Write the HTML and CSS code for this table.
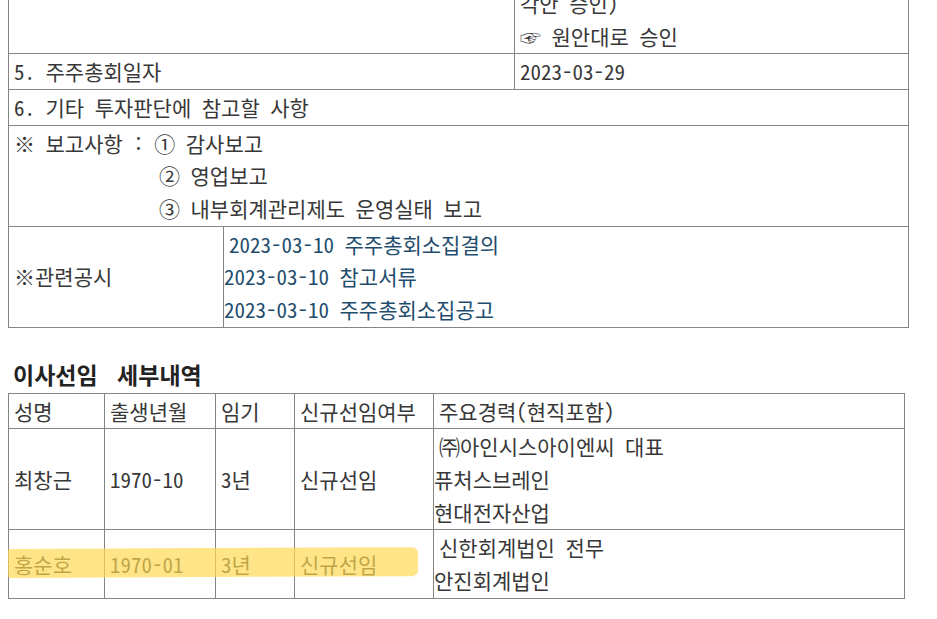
FILE: index.html
```html
<!DOCTYPE html>
<html lang="ko">
<head>
<meta charset="utf-8">
<title>주주총회소집결의</title>
<link rel="stylesheet" href="styles.css">
</head>
<body>
<div class="page">
  <table class="grid top">
    <colgroup><col class="c1"><col class="c2"><col class="c3"></colgroup>
    <tr>
      <td colspan="2"></td>
      <td><div class="ln">각안 승인)</div><div class="ln">☞ 원안대로 승인</div></td>
    </tr>
    <tr>
      <td colspan="2">5. 주주총회일자</td>
      <td>2023-03-29</td>
    </tr>
    <tr>
      <td colspan="3">6. 기타 투자판단에 참고할 사항</td>
    </tr>
    <tr>
      <td colspan="3" class="report">
        <div class="ln">※ 보고사항 : ① 감사보고</div>
        <div class="ln ind">② 영업보고</div>
        <div class="ln ind">③ 내부회계관리제도 운영실태 보고</div>
      </td>
    </tr>
    <tr>
      <td>※관련공시</td>
      <td colspan="2" class="flush">
        <div class="ln first"><a class="lnk">2023-03-10 주주총회소집결의</a></div>
        <div class="ln"><a class="lnk">2023-03-10 참고서류</a></div>
        <div class="ln"><a class="lnk">2023-03-10 주주총회소집공고</a></div>
      </td>
    </tr>
  </table>

  <h3 class="title">이사선임 세부내역</h3>

  <div class="sel-wrap">
    <table class="grid dir">
      <colgroup><col class="d1"><col class="d2"><col class="d3"><col class="d4"><col class="d5"></colgroup>
      <tr>
        <td>성명</td><td>출생년월</td><td>임기</td><td>신규선임여부</td><td>주요경력(현직포함)</td>
      </tr>
      <tr>
        <td>최창근</td><td>1970-10</td><td>3년</td><td>신규선임</td>
        <td class="flush">
          <div class="ln first">㈜아인시스아이엔씨 대표</div>
          <div class="ln">퓨처스브레인</div>
          <div class="ln">현대전자산업</div>
        </td>
      </tr>
      <tr>
        <td>홍순호</td><td>1970-01</td><td>3년</td><td>신규선임</td>
        <td class="flush">
          <div class="ln first">신한회계법인 전무</div>
          <div class="ln">안진회계법인</div>
        </td>
      </tr>
    </table>
    <div class="marker"></div>
  </div>
</div>
</body>
</html>
```

FILE: styles.css
```css
html, body {
  margin: 0;
  padding: 0;
  background: #ffffff;
}

body {
  font-family: "Noto Sans Mono CJK KR", "Noto Sans CJK KR", sans-serif;
  font-size: 21px;
  font-weight: 300;
  color: #383838;
  overflow: hidden;
}

.page {
  padding-left: 8px;
}

.grid {
  border-collapse: collapse;
  table-layout: fixed;
}

.grid td {
  border: 1px solid #858585;
  padding: 1px 5px;
  line-height: 32.67px;
  vertical-align: middle;
  white-space: nowrap;
}

.top {
  width: 900px;
  margin-top: -15px;
}

.c1 { width: 215px; }
.c2 { width: 291px; }
.c3 { width: 394px; }

.ln {
  line-height: 32.67px;
  height: 32.67px;
}

.ind {
  padding-left: 145px;
}

.grid td.flush {
  padding-left: 0;
}

.first {
  padding-left: 5px;
}

.lnk {
  color: #1f4d6e;
  text-decoration: none;
}

.title {
  margin: 32px 0 5px 5px;
  font-family: "Noto Sans CJK KR", sans-serif;
  font-size: 23px;
  font-weight: 700;
  line-height: 28px;
  color: #222222;
  word-spacing: 13px;
}

.sel-wrap {
  position: relative;
  width: 896px;
}

.dir {
  width: 896px;
}

.d1 { width: 96px; }
.d2 { width: 111px; }
.d3 { width: 79px; }
.d4 { width: 139px; }
.d5 { width: 471px; }

.marker {
  position: absolute;
  left: 0;
  top: 155px;
  width: 410px;
  height: 29px;
  background: rgba(255, 216, 80, 0.68);
  border-radius: 2px 6px 6px 3px;
  transform: rotate(-0.25deg);
  pointer-events: none;
}
```
